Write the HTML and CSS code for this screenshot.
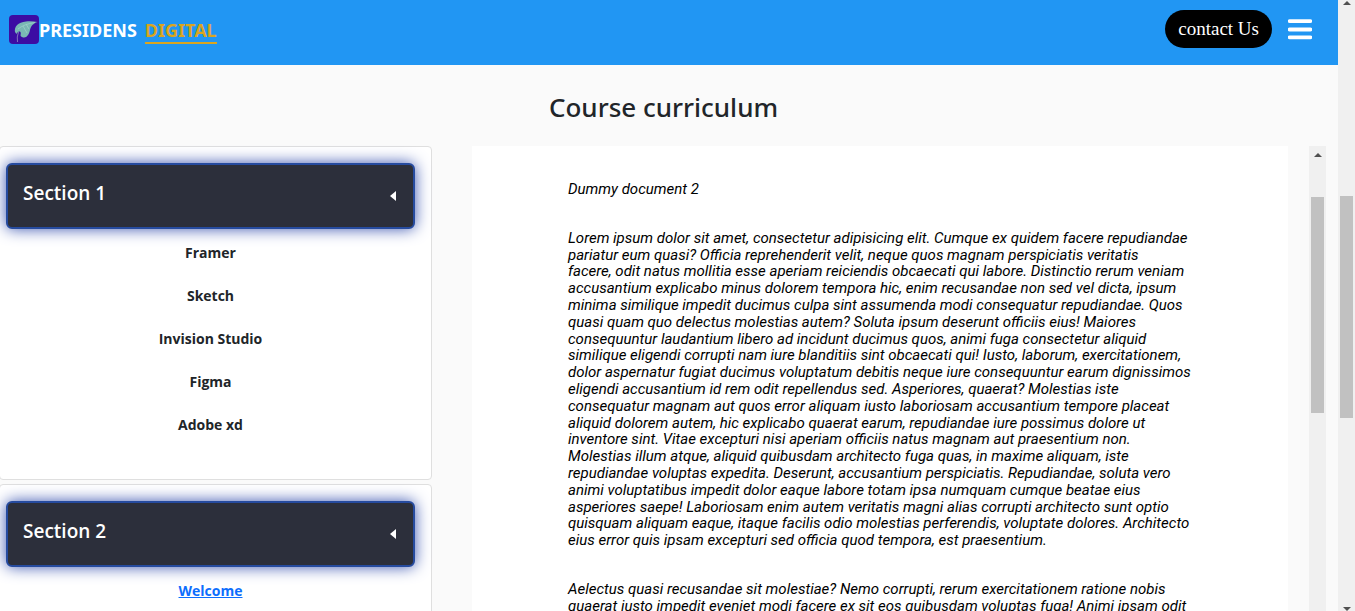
FILE: index.html
```html
<!DOCTYPE html>
<html lang="en">
<head>
<meta charset="utf-8">
<title>Presidens Digital - Course curriculum</title>
<link rel="stylesheet" href="styles.css">
</head>
<body>
<div class="window">
  <div class="page">
    <header class="navbar">
      <a class="brand" href="#">
        <svg class="brand-logo" viewBox="0 0 30 29" aria-hidden="true">
          <rect width="30" height="29" rx="4" fill="#3c0ca3"/>
          <path d="M6 17C5 12 9 7 17 6.500C21 6 25 6.500 28.500 7C24 8.500 22 11 21 15C20 20 17 24 13 22C10 21 13 18 11 16.500C9 16 8 18 7.500 19Z" fill="#79b8b4"/>
          <path d="M9 14Q15 9 26 7.500M17 9L20 14M14 11L18 18" fill="none" stroke="#a4d2cb" stroke-width=".7"/>
          <path d="M9.500 17Q7.500 22 8.500 27" fill="none" stroke="#8375bd"/>
        </svg>
        <span class="brand-name">PRESIDENS <span class="brand-accent">DIGITAL</span></span>
      </a>
      <div class="nav-actions">
        <button class="contact" type="button">contact Us</button>
        <button class="menu" type="button" aria-label="Open menu">
          <svg viewBox="0 0 23 20" aria-hidden="true"><path d="M1.500 2H21.500M1.500 10H21.500M1.500 17.500H21.500" stroke="#fff" stroke-width="3.600" stroke-linecap="round"/></svg>
        </button>
      </div>
    </header>
    <h1 class="title">Course curriculum</h1>
    <main class="course">
      <aside class="sections">
        <section class="card">
          <button class="section-head" type="button"><span>Section 1</span><svg class="caret" viewBox="0 0 6 10" aria-hidden="true"><path d="M6 0V10L0 5Z" fill="#fff"/></svg></button>
          <ul class="lessons"><li>Framer</li><li>Sketch</li><li>Invision Studio</li><li>Figma</li><li>Adobe xd</li></ul>
        </section>
        <section class="card">
          <button class="section-head" type="button"><span>Section 2</span><svg class="caret" viewBox="0 0 6 10" aria-hidden="true"><path d="M6 0V10L0 5Z" fill="#fff"/></svg></button>
          <ul class="lessons"><li><a href="#">Welcome</a></li></ul>
        </section>
      </aside>
      <article class="document">
        <p>Dummy document 2</p>
        <p>Lorem ipsum dolor sit amet, consectetur adipisicing elit. Cumque ex quidem facere repudiandae<br>
pariatur eum quasi? Officia reprehenderit velit, neque quos magnam perspiciatis veritatis<br>
facere, odit natus mollitia esse aperiam reiciendis obcaecati qui labore. Distinctio rerum veniam<br>
accusantium explicabo minus dolorem tempora hic, enim recusandae non sed vel dicta, ipsum<br>
minima similique impedit ducimus culpa sint assumenda modi consequatur repudiandae. Quos<br>
quasi quam quo delectus molestias autem? Soluta ipsum deserunt officiis eius! Maiores<br>
consequuntur laudantium libero ad incidunt ducimus quos, animi fuga consectetur aliquid<br>
similique eligendi corrupti nam iure blanditiis sint obcaecati qui! Iusto, laborum, exercitationem,<br>
dolor aspernatur fugiat ducimus voluptatum debitis neque iure consequuntur earum dignissimos<br>
eligendi accusantium id rem odit repellendus sed. Asperiores, quaerat? Molestias iste<br>
consequatur magnam aut quos error aliquam iusto laboriosam accusantium tempore placeat<br>
aliquid dolorem autem, hic explicabo quaerat earum, repudiandae iure possimus dolore ut<br>
inventore sint. Vitae excepturi nisi aperiam officiis natus magnam aut praesentium non.<br>
Molestias illum atque, aliquid quibusdam architecto fuga quas, in maxime aliquam, iste<br>
repudiandae voluptas expedita. Deserunt, accusantium perspiciatis. Repudiandae, soluta vero<br>
animi voluptatibus impedit dolor eaque labore totam ipsa numquam cumque beatae eius<br>
asperiores saepe! Laboriosam enim autem veritatis magni alias corrupti architecto sunt optio<br>
quisquam aliquam eaque, itaque facilis odio molestias perferendis, voluptate dolores. Architecto<br>
eius error quis ipsam excepturi sed officia quod tempora, est praesentium.</p>
        <p>Aelectus quasi recusandae sit molestiae? Nemo corrupti, rerum exercitationem ratione nobis<br>
quaerat iusto impedit eveniet modi facere ex sit eos quibusdam voluptas fuga! Animi ipsam odit</p>
      </article>
      <div class="scrollbar document-scrollbar" aria-hidden="true"><span class="arrow arrow-up"></span><span class="thumb"></span></div>
    </main>
  </div>
  <div class="scrollbar page-scrollbar" aria-hidden="true"><span class="arrow arrow-up"></span><span class="thumb"></span><span class="arrow arrow-down"></span></div>
</div>
</body>
</html>
```
FILE: styles.css
```css
* { box-sizing: border-box; }

body {
  margin: 0;
  overflow: hidden;
  background: #fafafa;
  color: #212529;
  font-family: "Open Sans", "Noto Sans", sans-serif;
}

button { border: 0; font: inherit; cursor: pointer; }

.window { display: flex; height: 100vh; overflow: hidden; }

.page {
  flex: 1;
  min-width: 0;
  display: flex;
  flex-direction: column;
}

.navbar {
  flex: none;
  display: flex;
  justify-content: space-between;
  align-items: flex-start;
  padding: 10px 26px 17px 9px;
  background: #2196f3;
}

.brand {
  display: flex;
  padding-top: 5px;
  color: #fff;
  font-family: "Noto Sans", sans-serif;
  font-size: 18px;
  font-weight: 700;
  text-decoration: none;
}

.brand-logo { width: 30px; height: 29px; }
.brand-name { display: flex; gap: 8px; line-height: 30px; }
.brand-accent { height: 29px; border-bottom: 2px solid #daa520; color: #daa520; }

.nav-actions { display: flex; align-items: center; gap: 16px; }

.contact {
  height: 38px;
  padding: 0 13px;
  border-radius: 19px;
  background: #000;
  color: #fff;
  font-family: "Liberation Serif", serif;
  font-size: 19px;
}

.menu { display: flex; padding: 0; background: none; }
.menu svg { width: 24px; height: 21px; }

.title {
  flex: none;
  margin: 0;
  padding: 22px 11px 19px 0;
  font-family: "Noto Sans", sans-serif;
  font-size: 26px;
  font-weight: 500;
  line-height: 40px;
  text-align: center;
}

.course {
  flex: 1;
  min-height: 0;
  display: grid;
  grid-template-columns: 432fr 877fr 17px;
  padding-right: 12px;
}

.sections {
  display: flex;
  flex-direction: column;
  gap: 4px;
  margin-left: -1px;
}

.card {
  flex: none;
  padding: 16px;
  padding-left: 6px;
  border: 1px solid #dfdfdf;
  border-radius: 4px;
  background: #fff;
}

.card:first-child { height: 334px; }

.section-head {
  display: flex;
  justify-content: space-between;
  width: 100%;
  height: 66px;
  padding: 13px 17px 13px 15px;
  border: 2px solid #264b9f;
  border-radius: 6px;
  background: #2c2f3b;
  box-shadow: 0 0 15px #3b55b0;
  color: #fff;
  font-size: 19px;
  font-weight: 600;
  line-height: 30px;
}

.caret { width: 6px; height: 10px; margin-top: 13px; }

.lessons {
  display: flex;
  flex-direction: column;
  gap: 19px;
  margin: 0;
  padding: 12px 0 0;
  list-style: none;
  font-size: 14px;
  font-weight: 700;
  line-height: 24px;
  text-align: center;
}

.lessons a { color: #0d6efd; }

.document {
  overflow: hidden;
  margin: 0 21px 0 40px;
  padding: 35px 96px 0;
  background: #fff;
  color: #000;
  font-family: Roboto, sans-serif;
  font-size: 15px;
  font-style: italic;
  line-height: 1.12;
  white-space: nowrap;
}

.document p { margin: 0 0 32px; }

.scrollbar {
  display: flex;
  flex-direction: column;
  align-items: center;
  background: #f0f0f0;
}

.thumb { width: 13px; background: #c1c1c1; }
.arrow { border: 4px solid transparent; border-top-width: 0; }
.arrow-up { border-bottom-color: #505050; }
.arrow-down { border-width: 4px 4px 0; border-top-color: #505050; margin-top: auto; }

.document-scrollbar { padding-top: 7px; }
.document-scrollbar .thumb { height: 216px; margin-top: 40px; }

.page-scrollbar { flex: 0 0 17px; padding-top: 1px; }
.page-scrollbar .thumb { height: 222px; margin-top: 191px; }
```
